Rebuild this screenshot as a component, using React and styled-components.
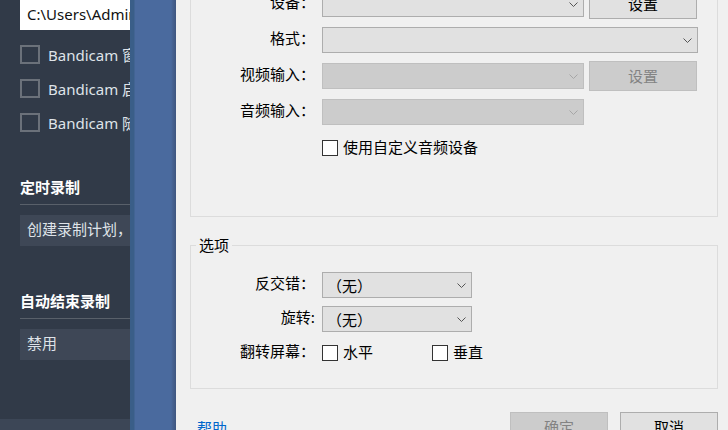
import React from "react";
import styled, { createGlobalStyle } from "styled-components";

const GlobalStyle = createGlobalStyle`
  html, body {
    margin: 0;
    padding: 0;
    background: #f0f0f0;
    overflow: hidden;
  }
  #root {
    width: 728px;
    height: 430px;
  }
`;

const Screen = styled.div`
  display: flex;
  width: 728px;
  height: 430px;
  overflow: hidden;
  font-family: "Noto Sans CJK SC", "Noto Sans", sans-serif;
`;

// dark settings panel behind the dialog
const SidePanel = styled.aside`
  flex: 0 0 130px;
  display: flex;
  flex-direction: column;
  background: #313a48;
  overflow: hidden;
  font-family: "Noto Sans", "Noto Sans CJK SC", sans-serif;
`;

const SideBody = styled.div`
  display: flex;
  flex-direction: column;
  padding-left: 20px;
`;

const PathField = styled.div`
  height: 30px;
  padding-left: 7px;
  background: #ffffff;
  color: #111;
  font-size: 15px;
  line-height: 28px;
  white-space: nowrap;
`;

const CheckList = styled.div`
  display: flex;
  flex-direction: column;
  gap: 14px;
  margin-top: 14px;
`;

const CheckItem = styled.div`
  display: flex;
  align-items: center;
  gap: 8px;
  height: 20px;
  color: #dfe3e8;
  font-size: 15px;
  white-space: nowrap;
`;

const DarkBox = styled.span`
  flex: 0 0 20px;
  height: 19px;
  box-sizing: border-box;
  border: 2px solid #6b717a;
`;

const SectionTitle = styled.div`
  margin-top: 45px;
  padding-bottom: 7px;
  border-bottom: 1px solid #59606a;
  color: #ffffff;
  font-family: "Noto Sans CJK SC", sans-serif;
  font-weight: bold;
  font-size: 15px;
  line-height: 20px;
  white-space: nowrap;
`;

const SectionValue = styled.div`
  margin-top: 10px;
  height: 31px;
  box-sizing: border-box;
  padding: 0 0 4px 7px;
  background: #3e4756;
  color: #dfe3e8;
  font-family: "Noto Sans CJK SC", sans-serif;
  font-size: 15px;
  line-height: 27px;
  white-space: nowrap;
`;

const SideFooter = styled.div`
  margin-top: auto;
  height: 11px;
  background: #3c4656;
`;

const WindowEdge = styled.div`
  flex: 0 0 46px;
  background: linear-gradient(
    to right,
    #3a5e88 0,
    #3a5e88 4px,
    #4a6a9e 5px,
    #4a6a9e 41px,
    #46618f 43px,
    #3f5680 46px
  );
`;

// device dialog
const Dialog = styled.section`
  flex: 1;
  display: flex;
  flex-direction: column;
  padding: 0 10px 0 14px;
  background: #f0f0f0;
  color: #000;
  font-size: 15px;
`;

const Group = styled.fieldset`
  display: flex;
  flex-direction: column;
  gap: ${(p) => p.$gap}px;
  margin: ${(p) => p.$top}px 0 0 0;
  padding: ${(p) => p.$pad};
  border: 1px solid #dcdcdc;
  min-width: 0;
`;

const Legend = styled.legend`
  margin-left: 5px;
  padding: 0 3px;
  font-size: 15px;
  line-height: 20px;
`;

const Row = styled.div`
  display: flex;
  align-items: center;
  height: ${(p) => p.$h}px;
`;

const Label = styled.span`
  flex: 0 0 124px;
  margin-right: 7px;
  padding-bottom: 6px;
  text-align: right;
  white-space: nowrap;
`;

const Select = styled.div`
  box-sizing: border-box;
  display: flex;
  align-items: center;
  justify-content: space-between;
  width: ${(p) => p.$w}px;
  height: 26px;
  padding: 0 5px 0 4px;
  background: ${(p) => (p.$disabled ? "#cccccc" : "#e1e1e1")};
  border: 1px solid ${(p) => (p.$disabled ? "#bfbfbf" : "#adadad")};
  color: ${(p) => (p.$disabled ? "#838383" : "#000")};
  white-space: nowrap;
`;

const Button = styled.button`
  box-sizing: border-box;
  width: ${(p) => p.$w}px;
  height: 30px;
  margin-left: ${(p) => p.$gap || 0}px;
  padding: 0 0 2px;
  background: ${(p) => (p.disabled ? "#cccccc" : "#e1e1e1")};
  border: 1px solid ${(p) => (p.disabled ? "#bfbfbf" : "#adadad")};
  color: ${(p) => (p.disabled ? "#838383" : "#000")};
  font: inherit;
`;

const CheckOption = styled.span`
  display: flex;
  align-items: center;
  width: ${(p) => (p.$w ? `${p.$w}px` : "auto")};
  white-space: nowrap;
`;

const OptionText = styled.span`
  padding-bottom: 3px;
`;

const Tick = styled.span`
  flex: 0 0 16px;
  height: 16px;
  box-sizing: border-box;
  margin-right: 5px;
  border: 1px solid #333333;
  background: #ffffff;
`;

const Footer = styled.div`
  display: flex;
  align-items: center;
  gap: 12px;
  margin-top: 23px;
  padding-left: 7px;
`;

const HelpLink = styled.a`
  margin-right: auto;
  color: #0066cc;
  text-decoration: none;
`;

function Chevron({ disabled }) {
  return (
    <svg width="9" height="5" viewBox="0 0 9 5">
      <path
        d="M0.5 0.5 L4.5 4.5 L8.5 0.5"
        fill="none"
        stroke={disabled ? "#a6a6a6" : "#555"}
        strokeWidth="1"
      />
    </svg>
  );
}

function Dropdown({ width, disabled, value }) {
  return (
    <Select $w={width} $disabled={disabled}>
      <span>{value}</span>
      <Chevron disabled={disabled} />
    </Select>
  );
}

function Check({ width, children }) {
  return (
    <CheckOption $w={width}>
      <Tick />
      <OptionText>{children}</OptionText>
    </CheckOption>
  );
}

const sideChecks = ["Bandicam 窗口总在最前", "Bandicam 启动时最小化", "Bandicam 随 Windows 启动"];

export default function App() {
  return (
    <>
      <GlobalStyle />
      <Screen>
        <SidePanel>
          <SideBody>
            <PathField>C:\Users\Administrator\Documents\Bandicam</PathField>
            <CheckList>
              {sideChecks.map((t) => (
                <CheckItem key={t}>
                  <DarkBox />
                  {t}
                </CheckItem>
              ))}
            </CheckList>
            <SectionTitle>定时录制</SectionTitle>
            <SectionValue>创建录制计划，</SectionValue>
            <SectionTitle>自动结束录制</SectionTitle>
            <SectionValue>禁用</SectionValue>
          </SideBody>
          <SideFooter />
        </SidePanel>

        <WindowEdge />

        <Dialog>
          <Group $top={-30} $pad="18px 0 53px 0" $gap={6}>
            <Row $h={30}>
              <Label>设备：</Label>
              <Dropdown width={262} />
              <Button $w={108} $gap={5}>设置</Button>
            </Row>
            <Row $h={30}>
              <Label>格式：</Label>
              <Dropdown width={376} />
            </Row>
            <Row $h={30}>
              <Label>视频输入：</Label>
              <Dropdown width={262} disabled />
              <Button $w={108} $gap={5} disabled>设置</Button>
            </Row>
            <Row $h={30}>
              <Label>音频输入：</Label>
              <Dropdown width={262} disabled />
            </Row>
            <Row $h={30}>
              <Label />
              <Check>使用自定义音频设备</Check>
            </Row>
          </Group>

          <Group $top={18} $pad="17px 0 22px 0" $gap={8}>
            <Legend>选项</Legend>
            <Row $h={26}>
              <Label>反交错：</Label>
              <Dropdown width={150} value="（无）" />
            </Row>
            <Row $h={26}>
              <Label>旋转:</Label>
              <Dropdown width={150} value="（无）" />
            </Row>
            <Row $h={26}>
              <Label>翻转屏幕：</Label>
              <Check width={110}>水平</Check>
              <Check>垂直</Check>
            </Row>
          </Group>

          <Footer>
            <HelpLink href="#">帮助</HelpLink>
            <Button $w={98} disabled>确定</Button>
            <Button $w={98}>取消</Button>
          </Footer>
        </Dialog>
      </Screen>
    </>
  );
}
